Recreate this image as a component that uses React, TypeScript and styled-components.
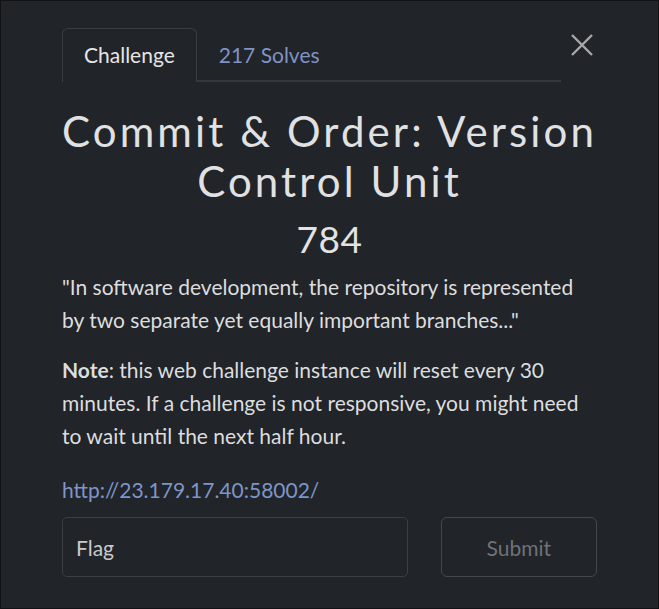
import styled, { createGlobalStyle } from "styled-components";

const GlobalStyle = createGlobalStyle`
  html, body {
    margin: 0;
    padding: 0;
    background: #111213;
  }
  body {
    font-family: Lato, "Open Sans", sans-serif;
    color: #e2e3e4;
  }
`;

const Modal = styled.div`
  box-sizing: border-box;
  width: 657px;
  height: 607px;
  margin: 1px;
  background: #212428;
  padding: 27px 61px 0 61px;
`;

const Header = styled.div`
  display: flex;
  align-items: flex-start;
`;

const TabList = styled.div`
  flex: 1;
  display: flex;
  border-bottom: 2px solid #34373c;
  height: 52px;
`;

const Tab = styled.div<{ $active?: boolean }>`
  box-sizing: border-box;
  height: 54px;
  padding: 0 21px 3px;
  display: flex;
  align-items: center;
  font-size: 21px;
  color: ${(p) => (p.$active ? "#e6e6e6" : "#7f93c6")};
  border: 1px solid ${(p) => (p.$active ? "#3a3d42" : "transparent")};
  border-bottom: none;
  border-radius: 6px 6px 0 0;
  background: ${(p) => (p.$active ? "#212428" : "transparent")};
`;

const Close = styled.button`
  width: 26px;
  height: 26px;
  margin: 4px 2px 0 8px;
  padding: 0;
  border: none;
  background: none;
  cursor: pointer;
`;

const Title = styled.h1`
  margin: 24px 0 0;
  text-align: center;
  font-weight: 400;
  font-size: 42px;
  line-height: 50px;
  letter-spacing: 3.1px;
  color: #e0e1e2;
`;

const Points = styled.div`
  margin-top: 11px;
  text-align: center;
  font-size: 37px;
  line-height: 44px;
  letter-spacing: 0.5px;
`;

const Text = styled.p<{ $gap: number }>`
  margin: ${(p) => p.$gap}px 0 0;
  font-size: 21px;
  line-height: 33px;
  color: #dcdddf;
`;

const Link = styled.a`
  display: block;
  margin-top: 24px;
  font-size: 21px;
  line-height: 28px;
  color: #7f95c9;
  text-decoration: none;
`;

const FlagRow = styled.form`
  display: flex;
  gap: 33px;
  margin-top: 13px;
`;

const FlagInput = styled.input`
  box-sizing: border-box;
  width: 347px;
  height: 60px;
  padding: 0 13px;
  background: transparent;
  border: 1px solid #3b3e43;
  border-radius: 5px;
  font-family: Lato, sans-serif;
  font-size: 21px;
  color: #e2e3e4;
  &::placeholder {
    color: #c9cacc;
  }
`;

const SubmitButton = styled.button`
  box-sizing: border-box;
  width: 157px;
  height: 60px;
  background: transparent;
  border: 1px solid #44474c;
  border-radius: 6px;
  font-family: Lato, sans-serif;
  font-size: 21px;
  color: #6f7277;
`;

export default function App() {
  return (
    <>
      <GlobalStyle />
      <Modal>
        <Header>
          <TabList>
            <Tab $active>Challenge</Tab>
            <Tab>217 Solves</Tab>
          </TabList>
          <Close aria-label="close">
            <svg width="26" height="26" viewBox="0 0 26 26">
              <path d="M3 3 L23 23 M23 3 L3 23" stroke="#a6a8ab" strokeWidth="2.4" />
            </svg>
          </Close>
        </Header>
        <Title>Commit &amp; Order: Version Control Unit</Title>
        <Points>784</Points>
        <Text $gap={9}>
          "In software development, the repository is represented by two separate yet equally
          important branches..."
        </Text>
        <Text $gap={17}>
          <b>Note</b>: this web challenge instance will reset every 30 minutes. If a challenge is
          not responsive, you might need to wait until the next half hour.
        </Text>
        <Link href="#">http://23.179.17.40:58002/</Link>
        <FlagRow onSubmit={(e) => e.preventDefault()}>
          <FlagInput placeholder="Flag" />
          <SubmitButton type="submit">Submit</SubmitButton>
        </FlagRow>
      </Modal>
    </>
  );
}
